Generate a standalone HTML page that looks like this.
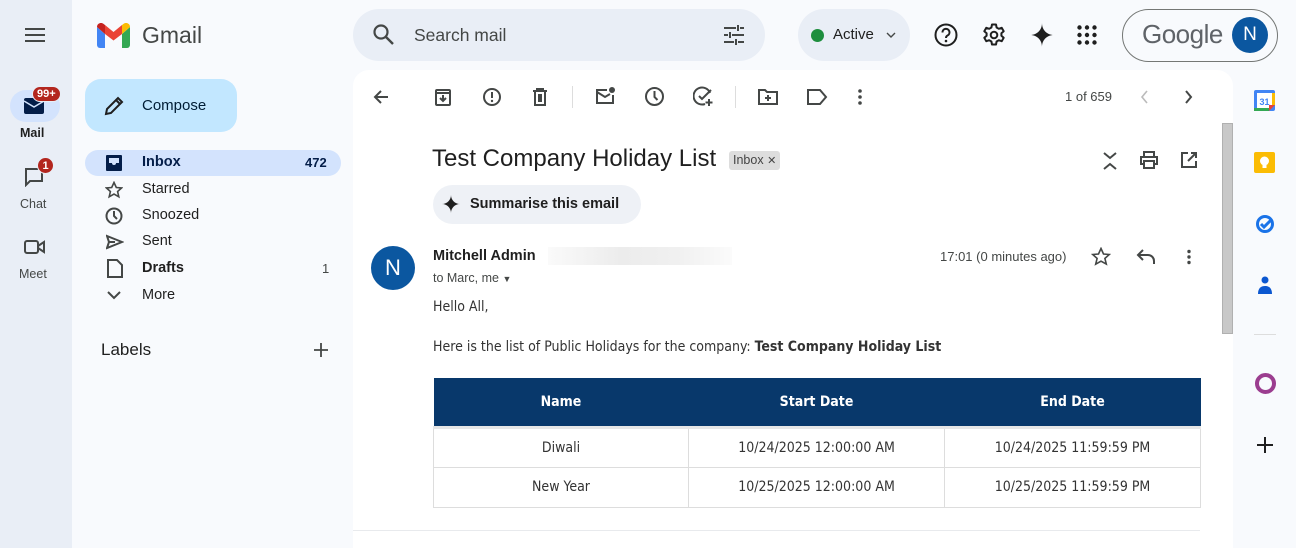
<!DOCTYPE html>
<html><head><meta charset="utf-8"><style>
*{box-sizing:border-box;margin:0;padding:0}
body{width:1296px;height:548px;overflow:hidden;background:#f8fafd;font-family:"Liberation Sans",Arial,sans-serif;color:#1f1f1f;position:relative}
.abs{position:absolute}
.rail{left:0;top:0;width:72px;height:548px;background:#e9eef6}
.ico{stroke:#444746;fill:none;stroke-width:2}
.navt{position:absolute;left:142px;font-size:14.5px;color:#1f1f1f}
.card{left:353px;top:70px;width:880px;height:478px;background:#fff;border-radius:16px 16px 0 0}
.body{font-family:"DejaVu Sans Condensed","DejaVu Sans",sans-serif;font-size:14px;color:#333}
table{border-collapse:collapse;table-layout:fixed;position:absolute;left:433px;top:378px;width:767px;font-family:"DejaVu Sans Condensed","DejaVu Sans",sans-serif;font-size:14px;color:#333}
th{background:#08386b;color:#fff;height:49px;font-weight:bold;border-bottom:3px solid #e6e6e6}
td{border:1px solid #ddd;height:40px;text-align:center}
</style></head><body>
<div class="abs rail"></div>
<svg class="abs" style="left:24px;top:26px" width="22" height="18"><path d="M1 3h20M1 9h20M1 15h20" stroke="#444746" stroke-width="2"/></svg>
<svg class="abs" style="left:97px;top:23px" width="33" height="25" viewBox="0 0 33 25"><path d="M0 4v18a3 3 0 0 0 3 3h5V11z" fill="#4285f4"/><path d="M25 25h5a3 3 0 0 0 3-3V4l-8 7z" fill="#34a853"/><path d="M25 11V2l2-1.5a4 4 0 0 1 6 3.5v0z" fill="#fbbc04"/><path d="M8 11V2l8.5 7 8.5-7v9l-8.5 6.5z" fill="#ea4335"/><path d="M0 4a4 4 0 0 1 6-3.5L8 2v9L0 4z" fill="#c5221f"/></svg>
<div class="abs" style="left:142px;top:22px;font-size:23px;color:#444746">Gmail</div>
<div class="abs" style="left:10px;top:90px;width:50px;height:32px;border-radius:16px;background:#d3e3fd"></div>
<svg class="abs" style="left:24px;top:98px" width="20" height="16"><rect x="0" y="0" width="20" height="16" rx="2" fill="#041e49"/><path d="M0 3l10 6 10-6" stroke="#d3e3fd" stroke-width="1.6" fill="none"/></svg>
<div class="abs" style="left:32px;top:86px;background:#b3261e;color:#fff;font-size:11px;font-weight:bold;padding:1px 4px;border-radius:8px;border:1.5px solid #e9eef6">99+</div>
<div class="abs" style="left:20px;top:126px;font-size:12.5px;font-weight:bold;color:#1f1f1f">Mail</div>
<svg class="abs" style="left:24px;top:167px" width="22" height="20"><path d="M2 2h16v12H6l-4 4z" class="ico"/></svg>
<div class="abs" style="left:37px;top:157px;width:17px;height:17px;border-radius:50%;background:#b3261e;color:#fff;font-size:11px;font-weight:bold;text-align:center;line-height:16px;border:1px solid #e9eef6">1</div>
<div class="abs" style="left:20px;top:197px;font-size:12.5px;color:#444746">Chat</div>
<svg class="abs" style="left:24px;top:238px" width="22" height="18"><rect x="1" y="3" width="13" height="12" rx="2" class="ico"/><path d="M14 8l6-4v10l-6-4" class="ico"/></svg>
<div class="abs" style="left:19px;top:267px;font-size:12.5px;color:#444746">Meet</div>
<div class="abs" style="left:85px;top:79px;width:152px;height:53px;border-radius:16px;background:#c2e7ff"></div>
<svg class="abs" style="left:103px;top:95px" width="22" height="22"><path d="M3 19l1-5L15 3l4 4L8 18z M13 5l4 4" stroke="#1f1f1f" stroke-width="2" fill="none"/></svg>
<div class="abs" style="left:142px;top:97px;font-size:15px;color:#001d35;font-weight:500">Compose</div>
<div class="abs" style="left:85px;top:150px;width:256px;height:26px;border-radius:13px;background:#d3e3fd"></div>
<svg class="abs" style="left:106px;top:155px" width="16" height="16"><rect x="0" y="0" width="16" height="16" rx="1" fill="#041e49"/><path d="M3 3h10v5h-3a2 2 0 0 1-4 0H3z" fill="#d3e3fd"/></svg>
<div class="navt" style="top:154px;font-weight:bold;color:#041e49">Inbox</div>
<div class="abs" style="left:305px;top:155px;font-size:13px;font-weight:bold;color:#041e49">472</div>
<svg class="abs" style="left:105px;top:181px" width="18" height="18"><path d="M9 1.5l2.3 5 5.3.4-4 3.6 1.2 5.3L9 13l-4.8 2.8 1.2-5.3-4-3.6 5.3-.4z" stroke="#444746" stroke-width="1.6" fill="none"/></svg>
<div class="navt" style="top:181px">Starred</div>
<svg class="abs" style="left:105px;top:207px" width="18" height="18"><circle cx="9" cy="9" r="7.5" class="ico" stroke-width="1.8"/><path d="M9 4v5l3 3" class="ico" stroke-width="1.8"/></svg>
<div class="navt" style="top:207px">Snoozed</div>
<svg class="abs" style="left:106px;top:234px" width="18" height="16"><path d="M1 2l15 6-15 6 2-6z M3 8h6" class="ico" stroke-width="1.6"/></svg>
<div class="navt" style="top:233px">Sent</div>
<svg class="abs" style="left:107px;top:259px" width="16" height="19"><path d="M1 1h9l5 5v12H1z" class="ico" stroke-width="1.8"/></svg>
<div class="navt" style="top:260px;font-weight:bold">Drafts</div>
<div class="abs" style="left:322px;top:261px;font-size:13px;color:#444746">1</div>
<svg class="abs" style="left:107px;top:290px" width="14" height="10"><path d="M1 2l6 6 6-6" class="ico" stroke-width="1.6"/></svg>
<div class="navt" style="top:287px">More</div>
<div class="abs" style="left:101px;top:340px;font-size:17px;color:#1f1f1f">Labels</div>
<svg class="abs" style="left:313px;top:342px" width="16" height="16"><path d="M8 1v14M1 8h14" stroke="#444746" stroke-width="1.8"/></svg>
<div class="abs" style="left:353px;top:9px;width:412px;height:52px;border-radius:26px;background:#e9eef6"></div>
<svg class="abs" style="left:373px;top:24px" width="22" height="22"><circle cx="8" cy="8" r="6.5" stroke="#444746" stroke-width="2.2" fill="none"/><path d="M13 13l7 7" stroke="#444746" stroke-width="2.4"/></svg>
<div class="abs" style="left:414px;top:25px;font-size:17.5px;color:#444746">Search mail</div>
<svg class="abs" style="left:723px;top:24px" width="22" height="22"><path d="M1 4h12M17 4h4M1 11h4M9 11h12M1 18h10M15 18h6M15 1v6M7 8v6M13 15v6" stroke="#444746" stroke-width="2"/></svg>
<div class="abs" style="left:798px;top:9px;width:112px;height:52px;border-radius:26px;background:#e9eef6"></div>
<div class="abs" style="left:811px;top:29px;width:13px;height:13px;border-radius:50%;background:#1e8e3e"></div>
<div class="abs" style="left:833px;top:26px;font-size:15px;font-weight:500;color:#1f1f1f">Active</div>
<svg class="abs" style="left:886px;top:32px" width="10" height="6"><path d="M1 1l4 4 4-4" stroke="#444746" stroke-width="1.4" fill="none"/></svg>
<svg class="abs" style="left:934px;top:23px" width="24" height="24"><circle cx="12" cy="12" r="10.5" stroke="#1f1f1f" stroke-width="2" fill="none"/><path d="M8.5 9.5a3.5 3.5 0 1 1 5 3c-1.2.6-1.5 1.3-1.5 2.5" stroke="#1f1f1f" stroke-width="2" fill="none"/><circle cx="12" cy="18" r="1.3" fill="#1f1f1f"/></svg>
<svg class="abs" style="left:982px;top:23px" width="24" height="24" viewBox="0 0 24 24"><path d="M10 1.5h4l.6 3 2.2 1.3 2.9-1 2 3.4-2.3 2v2.6l2.3 2-2 3.4-2.9-1-2.2 1.3-.6 3h-4l-.6-3-2.2-1.3-2.9 1-2-3.4 2.3-2v-2.6l-2.3-2 2-3.4 2.9 1 2.2-1.3z" stroke="#1f1f1f" stroke-width="2" fill="none" stroke-linejoin="round"/><circle cx="12" cy="12" r="3.3" stroke="#1f1f1f" stroke-width="2" fill="none"/></svg>
<svg class="abs" style="left:1030px;top:23px" width="24" height="24"><path d="M12 0C12 7 17 12 24 12 17 12 12 17 12 24 12 17 7 12 0 12 7 12 12 7 12 0z" fill="#1f1f1f"/></svg>
<svg class="abs" style="left:1077px;top:25px" width="20" height="20"><g fill="#1f1f1f"><circle cx="2.5" cy="2.5" r="2.2"/><circle cx="10" cy="2.5" r="2.2"/><circle cx="17.5" cy="2.5" r="2.2"/><circle cx="2.5" cy="10" r="2.2"/><circle cx="10" cy="10" r="2.2"/><circle cx="17.5" cy="10" r="2.2"/><circle cx="2.5" cy="17.5" r="2.2"/><circle cx="10" cy="17.5" r="2.2"/><circle cx="17.5" cy="17.5" r="2.2"/></g></svg>
<div class="abs" style="left:1122px;top:9px;width:156px;height:53px;border-radius:27px;border:1px solid #747775"></div>
<div class="abs" style="left:1142px;top:19px;font-size:26px;color:#5f6368;letter-spacing:-.5px">Google</div>
<div class="abs" style="left:1232px;top:17px;width:36px;height:36px;border-radius:50%;background:#0b57a0;color:#fff;font-size:19px;text-align:center;line-height:36px">N</div>
<div class="abs card"></div>
<div class="abs" style="left:1222px;top:123px;width:11px;height:211px;background:#c8c8c8;border:1px solid #b0b0b0"></div>
<svg class="abs" style="left:372px;top:88px" width="18" height="18"><path d="M16 9H3M9 3L3 9l6 6" stroke="#444746" stroke-width="2" fill="none"/></svg>
<svg class="abs" style="left:434px;top:87px" width="18" height="20"><rect x="2" y="3" width="14" height="15" rx="1" class="ico" stroke-width="1.8"/><path d="M2 6h14M9 8v6M6 11l3 3 3-3" class="ico" stroke-width="1.6"/></svg>
<svg class="abs" style="left:482px;top:87px" width="20" height="20"><circle cx="10" cy="10" r="8" class="ico" stroke-width="1.8"/><path d="M10 5v6" class="ico"/><circle cx="10" cy="14" r="1.2" fill="#444746"/></svg>
<svg class="abs" style="left:531px;top:87px" width="18" height="20"><path d="M2 4h14M6 4V2h6v2M4 4v14h10V4M8 7v8M10 7v8" class="ico" stroke-width="1.6"/></svg>
<div class="abs" style="left:572px;top:86px;width:1px;height:22px;background:#ddd"></div>
<svg class="abs" style="left:595px;top:86px" width="22" height="20"><path d="M12 4H2v13h16V9M2 6l8 5 5-3" class="ico" stroke-width="1.8"/><circle cx="17" cy="4" r="3" fill="#444746"/></svg>
<svg class="abs" style="left:644px;top:86px" width="21" height="21"><circle cx="10.5" cy="10.5" r="8.5" class="ico" stroke-width="1.8"/><path d="M10.5 5v6l3 3" class="ico" stroke-width="1.8"/></svg>
<svg class="abs" style="left:693px;top:86px" width="22" height="22"><path d="M17 7a8.5 8.5 0 1 0-5 11" class="ico" stroke-width="1.8"/><path d="M6 10l3 3 9-9M16 13v7M12.5 16.5h7" class="ico" stroke-width="1.8"/></svg>
<div class="abs" style="left:735px;top:86px;width:1px;height:22px;background:#ddd"></div>
<svg class="abs" style="left:758px;top:87px" width="20" height="18"><path d="M1 3h6l2 2h10v12H1z" class="ico" stroke-width="1.8"/><path d="M10 8v6M7 11h6" class="ico" stroke-width="1.6"/></svg>
<svg class="abs" style="left:806px;top:88px" width="22" height="18"><path d="M2 2h12l6 7-6 7H2z" class="ico" stroke-width="1.8"/></svg>
<svg class="abs" style="left:857px;top:88px" width="6" height="18"><g fill="#444746"><circle cx="3" cy="3" r="1.8"/><circle cx="3" cy="9" r="1.8"/><circle cx="3" cy="15" r="1.8"/></g></svg>
<div class="abs" style="left:1065px;top:89px;font-size:13px;color:#444746">1 of 659</div>
<svg class="abs" style="left:1140px;top:90px" width="10" height="14"><path d="M7 1L2 7l5 6" stroke="#bbb" stroke-width="1.6" fill="none"/></svg>
<svg class="abs" style="left:1183px;top:90px" width="10" height="14"><path d="M3 1l5 6-5 6" stroke="#444746" stroke-width="2" fill="none"/></svg>
<div class="abs" style="left:432px;top:145px;font-size:24px;color:#1f1f1f">Test Company Holiday List</div>
<div class="abs" style="left:729px;top:151px;height:19px;padding:0 4px;background:#ddd;border-radius:3px;font-size:12.5px;color:#444;line-height:19px">Inbox <span style="font-size:11px">✕</span></div>
<svg class="abs" style="left:1102px;top:151px" width="16" height="20"><path d="M2 2l6 5 6-5M2 18l6-5 6 5" class="ico" stroke-width="1.6"/></svg>
<svg class="abs" style="left:1139px;top:151px" width="20" height="18"><path d="M5 6V1h10v5M5 13H2V6h16v7h-3M5 10h10v7H5z" class="ico" stroke-width="1.8"/></svg>
<svg class="abs" style="left:1180px;top:151px" width="18" height="18"><path d="M8 2H2v14h14v-6M11 2h5v5M16 2l-8 8" class="ico" stroke-width="1.8"/></svg>
<div class="abs" style="left:433px;top:185px;width:208px;height:39px;border-radius:20px;background:#eef1f6"></div>
<svg class="abs" style="left:442px;top:195px" width="18" height="18"><path d="M9 0C9 5 13 9 18 9 13 9 9 13 9 18 9 13 5 9 0 9 5 9 9 5 9 0z" fill="#1f1f1f"/></svg>
<div class="abs" style="left:470px;top:196px;font-size:14.5px;font-weight:bold;color:#1f1f1f">Summarise this email</div>
<div class="abs" style="left:371px;top:246px;width:44px;height:44px;border-radius:50%;background:#0b57a0;color:#fff;font-size:22px;text-align:center;line-height:44px">N</div>
<div class="abs" style="left:433px;top:248px;font-size:14.5px;font-weight:bold;color:#1f1f1f">Mitchell Admin</div>
<div class="abs" style="left:548px;top:247px;width:184px;height:18px;background:linear-gradient(90deg,#fafafa,#ececec 40%,#f0f0f0 70%,#fbfbfb)"></div>
<div class="abs" style="left:433px;top:271px;font-size:12.5px;color:#444746">to Marc, me <span style="font-size:9px">▼</span></div>
<div class="abs" style="left:940px;top:249px;font-size:13px;color:#444746">17:01 (0 minutes ago)</div>
<svg class="abs" style="left:1091px;top:247px" width="20" height="20"><path d="M10 1.5l2.5 5.5 5.8.5-4.4 3.9 1.4 5.7L10 14.2l-5.3 3 1.4-5.8L1.7 7.5l5.8-.5z" stroke="#444746" stroke-width="1.6" fill="none"/></svg>
<svg class="abs" style="left:1136px;top:248px" width="20" height="18"><path d="M7 2L2 7l5 5M2 7h10a6 6 0 0 1 6 6v3" class="ico" stroke-width="1.8"/></svg>
<svg class="abs" style="left:1186px;top:249px" width="6" height="16"><g fill="#444746"><circle cx="3" cy="2.5" r="1.7"/><circle cx="3" cy="8" r="1.7"/><circle cx="3" cy="13.5" r="1.7"/></g></svg>
<div class="abs body" style="left:433px;top:299px">Hello All,</div>
<div class="abs body" style="left:433px;top:339px">Here is the list of Public Holidays for the company: <b>Test Company Holiday List</b></div>
<table><colgroup><col style="width:255px"><col style="width:256px"><col style="width:256px"></colgroup><tr><th>Name</th><th>Start Date</th><th>End Date</th></tr>
<tr><td>Diwali</td><td>10/24/2025 12:00:00 AM</td><td>10/24/2025 11:59:59 PM</td></tr>
<tr><td>New Year</td><td>10/25/2025 12:00:00 AM</td><td>10/25/2025 11:59:59 PM</td></tr></table>
<div class="abs" style="left:353px;top:530px;width:847px;height:1px;background:#e8eaed"></div>
<svg class="abs" style="left:1254px;top:90px" width="21" height="21"><rect x="0" y="0" width="21" height="21" rx="2" fill="#4285f4"/><rect x="3" y="3" width="15" height="15" fill="#fff"/><rect x="0" y="18" width="15" height="3" fill="#34a853"/><rect x="18" y="3" width="3" height="12" fill="#fbbc04"/><path d="M15 21l6-6h-6z" fill="#ea4335"/><text x="10.5" y="15" font-size="9" font-family="Liberation Sans" fill="#4285f4" text-anchor="middle" font-weight="bold">31</text></svg>
<svg class="abs" style="left:1254px;top:152px" width="21" height="21"><rect width="21" height="21" rx="2" fill="#fbbc04"/><circle cx="10.5" cy="9" r="4.5" fill="#fff"/><rect x="8.5" y="13" width="4" height="3" fill="#fff"/></svg>
<svg class="abs" style="left:1255px;top:214px" width="20" height="20"><circle cx="10" cy="10" r="7.5" stroke="#1a73e8" stroke-width="3" fill="none"/><path d="M6 10l3 3 8-8" stroke="#1a73e8" stroke-width="3" fill="none"/></svg>
<svg class="abs" style="left:1256px;top:275px" width="18" height="20"><circle cx="9" cy="5" r="3.5" fill="#0b57d0"/><path d="M2 19c0-6 3-8 7-8s7 2 7 8z" fill="#0b57d0"/></svg>
<div class="abs" style="left:1254px;top:334px;width:22px;height:1px;background:#ddd"></div>
<div class="abs" style="left:1255px;top:373px;width:21px;height:21px;border-radius:50%;border:4px solid #9b3d8f"></div>
<svg class="abs" style="left:1257px;top:437px" width="16" height="16"><path d="M8 0v16M0 8h16" stroke="#1f1f1f" stroke-width="2"/></svg>
</body></html>
